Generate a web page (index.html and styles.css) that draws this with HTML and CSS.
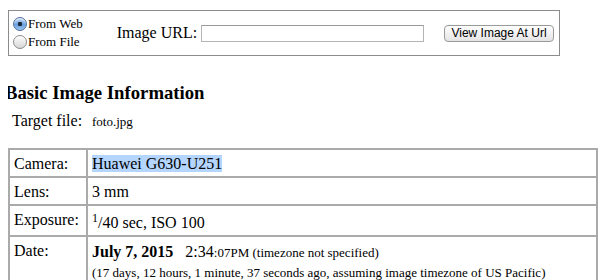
FILE: index.html
```html
<!DOCTYPE html>
<html lang="en">
<head>
<meta charset="UTF-8">
<title>Image Information</title>
<link rel="stylesheet" href="styles.css">
</head>
<body>

<!-- source picker -->
<div class="source-box">
  <div class="source-choice">
    <label><input type="radio" name="src" checked>From Web</label>
    <label><input type="radio" name="src">From File</label>
  </div>
  <label class="url-label">Image URL: <input type="text" class="url-input"></label>
  <button class="view-btn">View Image At Url</button>
</div>

<h3 class="section-title">Basic Image Information</h3>
<div class="target-file">
  <span class="target-label">Target file:</span>
  <span class="target-name">foto.jpg</span>
</div>

<table class="info-table">
  <tr>
    <td class="key">Camera:</td>
    <td><span class="selected">Huawei G630-U251</span></td>
  </tr>
  <tr>
    <td class="key">Lens:</td>
    <td>3 mm</td>
  </tr>
  <tr>
    <td class="key">Exposure:</td>
    <td class="exposure"><sup>1</sup>/40 sec, ISO 100</td>
  </tr>
  <tr>
    <td class="key">Date:</td>
    <td class="date">
      <b>July 7, 2015</b>&nbsp;&nbsp; 2:34<small>:07PM (timezone not specified)</small><br>
      <small>(17 days, 12 hours, 1 minute, 37 seconds ago, assuming image timezone of US Pacific)</small>
    </td>
  </tr>
</table>

</body>
</html>
```

FILE: styles.css
```css
body {
  margin: 8px;
  font-family: "Liberation Serif", "Times New Roman", serif;
  font-size: 16px;
  color: #000;
  background: #fff;
}
.source-box {
  display: flex;
  align-items: center;
  width: 552px;
  height: 46px;
  margin-top: 2px;
  border: 1px solid #8c8c8c;
  box-sizing: border-box;
  padding: 0 5px 0 4px;
}
.source-choice {
  display: flex;
  flex-direction: column;
  font-size: 13px;
  line-height: 18px;
}
.source-choice label {
  display: flex;
  align-items: center;
}
.source-choice input {
  appearance: none;
  -webkit-appearance: none;
  width: 14px;
  height: 14px;
  margin: 0 1px 0 0;
  border-radius: 50%;
  border: 1px solid #8a8a8a;
  background: linear-gradient(#fdfdfd, #d6d6d6);
  box-shadow: inset 0 1px 1px rgba(255, 255, 255, 0.8);
}
.source-choice input:checked {
  border-color: #4f6f9c;
  background: radial-gradient(circle at 50% 50%, #1b2a3a 0 2px, transparent 2.5px),
              linear-gradient(#c9def7, #6a9fe0 55%, #9cc4f1);
}
.url-label {
  margin-left: 34px;
  display: flex;
  align-items: center;
  white-space: pre;
}
.url-input {
  width: 223px;
  height: 17px;
  margin: 0;
  padding: 0 2px;
  box-sizing: border-box;
  border: 1px solid #b4b4b4;
  border-top-color: #9a9a9a;
}
.view-btn {
  margin-left: auto;
  width: 110px;
  height: 17px;
  padding: 0;
  font-family: "Liberation Sans", Arial, sans-serif;
  font-size: 12px;
  line-height: 15px;
  color: #000;
  border: 1px solid #9a9a9a;
  border-radius: 4px;
  background: linear-gradient(#ffffff, #f1f1f1 50%, #e4e4e4);
}
.section-title {
  font-size: 18.72px;
  margin: 26px 0 0 -3px;
}
.target-file {
  margin-top: 8px;
  display: flex;
  align-items: baseline;
}
.target-label {
  width: 80px;
  padding-left: 4px;
}
.target-name {
  font-size: 13px;
}
.info-table {
  width: 100%;
  margin-top: 18px;
  border-collapse: collapse;
  border: 2px solid #aaa;
}
.info-table td {
  border: 2px solid #aaa;
  padding: 4px 4px 3px;
  vertical-align: top;
  line-height: 19px;
}
.info-table td.key {
  width: 68px;
}
.info-table td.exposure {
  padding-top: 6px;
}
.info-table sup {
  font-size: 12px;
  line-height: 12px;
}
.info-table small {
  font-size: 13px;
}
.info-table td.date {
  padding-top: 5px;
}
.info-table td small:last-child {
  line-height: 14px;
}
.selected {
  background: #b4d5fe;
}
```
